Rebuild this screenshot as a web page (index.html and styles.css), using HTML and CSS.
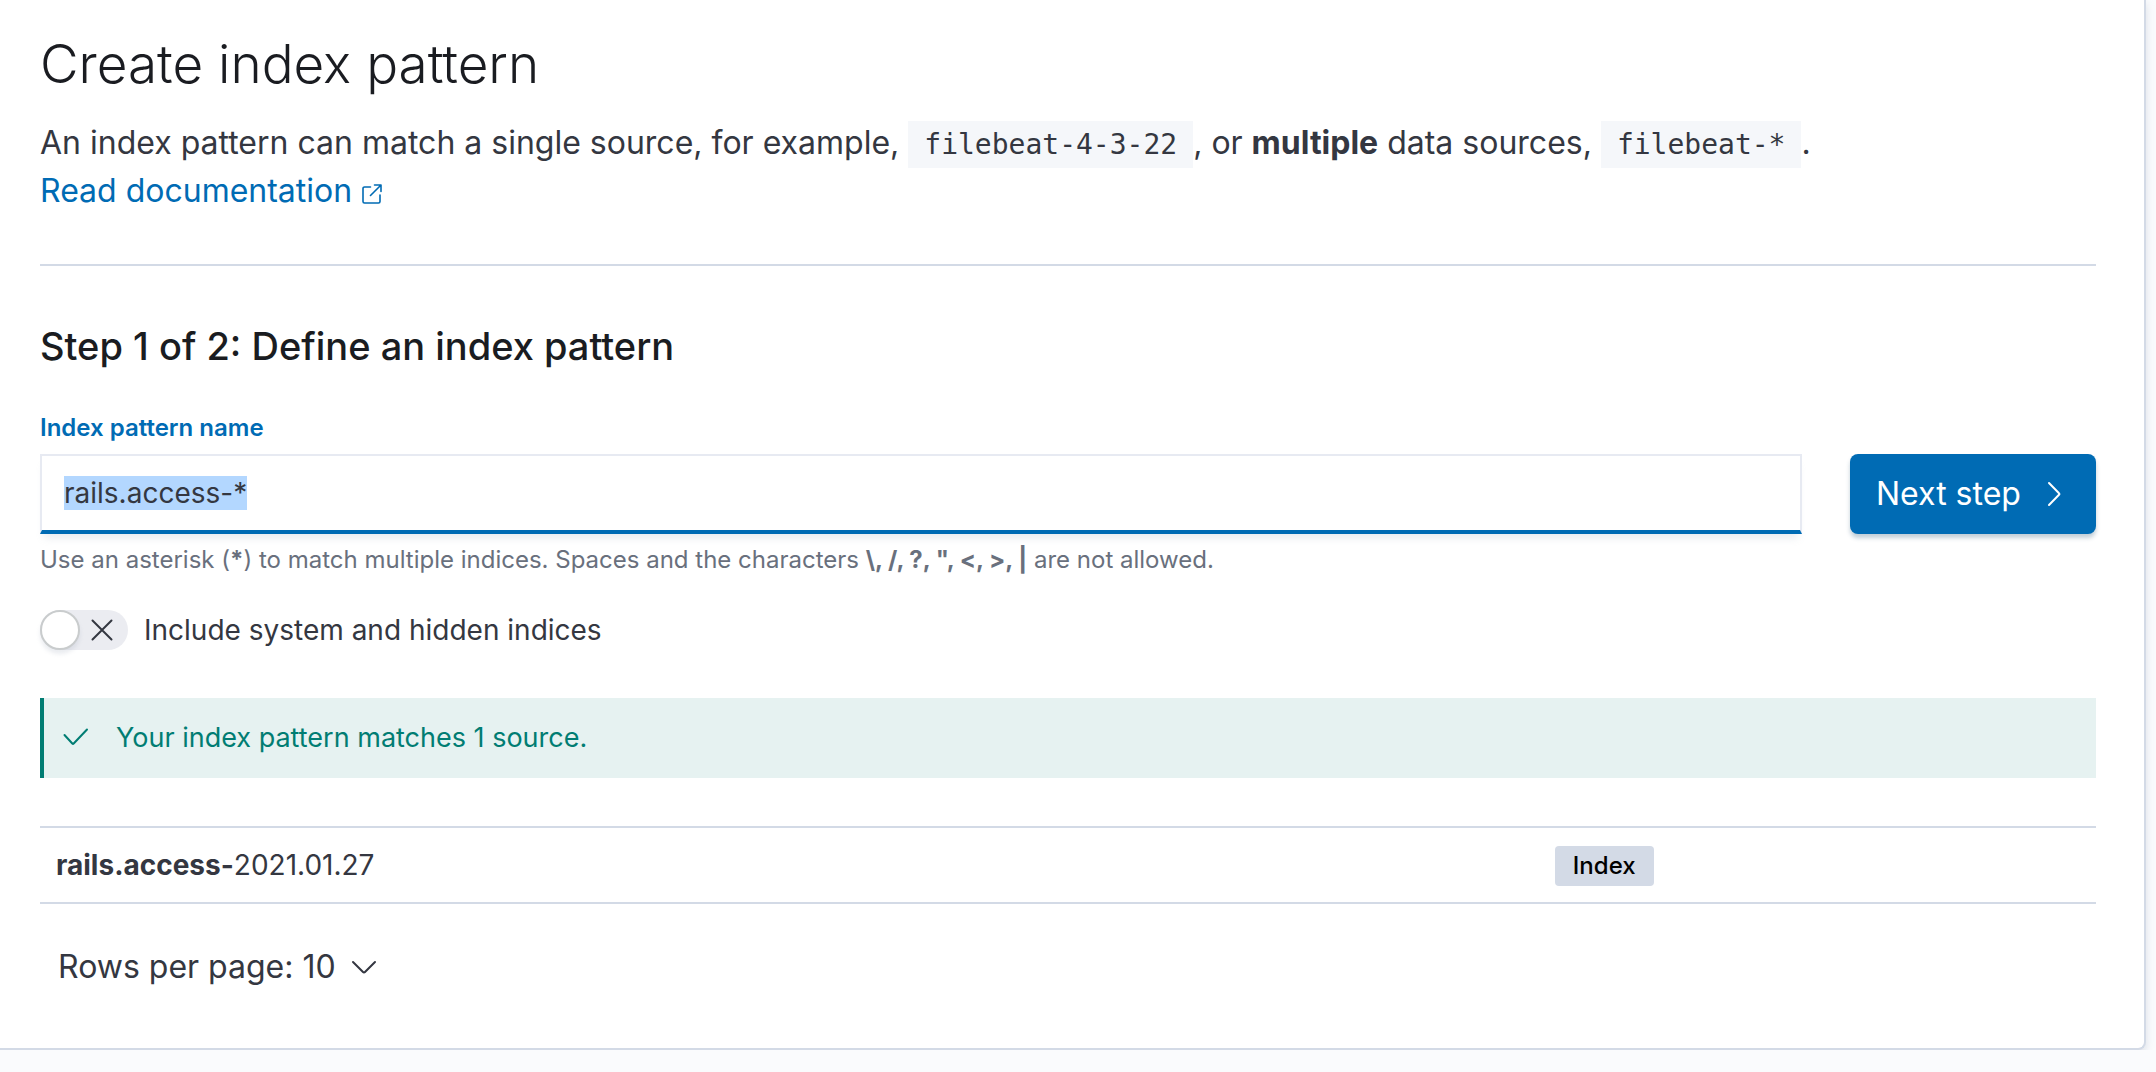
FILE: index.html
```html
<!DOCTYPE html>
<html lang="en">
<head>
    <meta charset="UTF-8">
    <meta name="viewport" content="width=device-width, initial-scale=1.0">
    <title>Create index pattern</title>
    <link rel="stylesheet" href="styles.css">
</head>
<body>
    <main class="panel">
        <header class="page-header">
            <h1>Create index pattern</h1>
            <p class="description">
                An index pattern can match a single source, for example, <code>filebeat-4-3-22</code>, or <strong>multiple</strong> data sources, <code>filebeat-*</code>.<br>
                <a href="#docs">Read documentation<svg class="external-icon" viewBox="0 0 20 20" aria-hidden="true"><path d="M8.500 3H2.500a1.500 1.500 0 0 0-1.500 1.500V17.500A1.500 1.500 0 0 0 2.500 19h14a1.500 1.500 0 0 0 1.500-1.500V11M12.500 1H19v6.500M19 1L8.500 11.500"/></svg></a>
            </p>
        </header>

        <hr>

        <h2>Step 1 of 2: Define an index pattern</h2>

        <form class="pattern-form">
            <div class="field">
                <label class="field-label" for="pattern-name">Index pattern name</label>
                <input type="text" id="pattern-name" class="field-text" value="rails.access-*" spellcheck="false" autocomplete="off" aria-describedby="pattern-help">
                <p class="help-text" id="pattern-help">Use an asterisk (<strong>*</strong>) to match multiple indices. Spaces and the characters <strong>\, /, ?, ", &lt;, &gt;, |</strong> are not allowed.</p>
            </div>
            <button type="submit" class="next-button">
                Next step
                <svg class="icon" viewBox="0 0 32 32" aria-hidden="true"><path d="M11 5l10 10.200a1 1 0 0 1 0 1.600L11 27"/></svg>
            </button>
        </form>

        <div class="switch">
            <span class="switch-body">
                <input type="checkbox" role="switch" id="include-hidden" class="switch-input">
                <svg class="switch-cross" viewBox="0 0 22 22" aria-hidden="true"><path d="M1.500 1.500l19 19M20.500 1.500l-19 19"/></svg>
            </span>
            <label for="include-hidden">Include system and hidden indices</label>
        </div>

        <div class="callout" role="status">
            <svg class="icon" viewBox="0 0 32 32" aria-hidden="true"><path d="M4.500 13l7.800 8.500a1 1 0 0 0 1.400 0L27 7.500"/></svg>
            <span>Your index pattern matches 1 source.</span>
        </div>

        <table class="matches">
            <tbody>
                <tr>
                    <td class="match-name"><strong>rails.access-</strong>2021.01.27</td>
                    <td><span class="badge">Index</span></td>
                </tr>
            </tbody>
        </table>

        <button type="button" class="rows-button">
            Rows per page: 10
            <svg class="icon" viewBox="0 0 32 32" aria-hidden="true"><path d="M5 11l10 10a1.400 1.400 0 0 0 2 0l10-10"/></svg>
        </button>
    </main>

    <script>
        const nameInput = document.getElementById('pattern-name');
        nameInput.focus();
        nameInput.select();
    </script>
</body>
</html>
```
FILE: styles.css
```css
*,
*::before {
    box-sizing: border-box;
}

body {
    margin: 0;
    background-color: #fafbfd;
    color: #343741;
    font-family: Inter, 'Liberation Sans', sans-serif;
    font-size: 28px;
    line-height: 40px;
}

.panel {
    margin-right: 10px;
    padding: 32px 48px 57px 40px;
    background-color: #fff;
    border-right: 2px solid #d3dae6;
    border-bottom: 2px solid #d3dae6;
    border-bottom-right-radius: 8px;
    box-shadow: 0 4px 8px rgba(152, 162, 179, 0.3);
}

h1, h2, p {
    margin: 0;
}

h1 {
    margin-bottom: 23px;
    color: #1a1c21;
    font-size: 53px;
    font-weight: 300;
    line-height: 64px;
}

.description {
    font-size: 32px;
    line-height: 48px;
}

strong {
    font-weight: 700;
}

a {
    color: #006bb4;
    text-decoration: none;
}

a:hover {
    text-decoration: underline;
}

code {
    padding: 7px 16px;
    background-color: #f5f7fa;
    font-family: 'DejaVu Sans Mono', monospace;
    font-size: 28px;
    line-height: 32px;
}

svg {
    fill: none;
    stroke: currentColor;
    stroke-width: 2;
    stroke-linecap: round;
    stroke-linejoin: round;
    flex-shrink: 0;
}

.external-icon {
    width: 20px;
    height: 20px;
    margin-left: 10px;
    vertical-align: -2px;
    stroke-width: 1.6;
}

.icon {
    width: 32px;
    height: 32px;
}

hr {
    margin: 49px 0 56px;
    border: 0;
    border-top: 2px solid #d3dae6;
}

h2 {
    margin-bottom: 40px;
    color: #1a1c21;
    font-size: 38px;
    font-weight: 500;
    line-height: 48px;
}

.pattern-form {
    display: flex;
    align-items: center;
    gap: 48px;
    margin-bottom: 32px;
}

.field {
    flex: 1;
}

.field-label {
    display: block;
    margin-bottom: 8px;
    color: #006bb4;
    font-size: 24px;
    font-weight: 600;
    line-height: 36px;
}

.field-text {
    display: block;
    width: 100%;
    height: 80px;
    padding: 0 22px;
    border: 2px solid #e7eaf2;
    border-bottom: 4px solid #006bb4;
    border-radius: 0;
    outline: none;
    background-color: #fff;
    box-shadow: 0 8px 8px -4px rgba(152, 162, 179, 0.2);
    color: #343741;
    font: inherit;
}

.field-text::selection {
    background-color: #b3d7ff;
    color: #343741;
}

.help-text {
    margin-top: 8px;
    color: #69707d;
    font-size: 24px;
    line-height: 36px;
}

.next-button {
    display: flex;
    align-items: center;
    justify-content: space-between;
    gap: 16px;
    width: 246px;
    height: 80px;
    padding: 0 26px;
    border: 0;
    border-radius: 8px;
    background-color: #006bb4;
    box-shadow: 0 4px 4px rgba(54, 97, 126, 0.3);
    color: #fff;
    font: inherit;
    font-size: 32px;
    cursor: pointer;
}

.switch {
    display: flex;
    align-items: center;
    gap: 16px;
    margin-bottom: 48px;
}

.switch-body {
    display: flex;
    align-items: center;
    position: relative;
    width: 88px;
    height: 40px;
}

.switch-input {
    appearance: none;
    width: 100%;
    height: 100%;
    margin: 0;
    border-radius: 20px;
    background-color: #ebecf1;
    cursor: pointer;
}

.switch-input::before {
    content: '';
    display: block;
    width: 40px;
    height: 40px;
    border: 2px solid #c9cccd;
    border-radius: 50%;
    background-color: #fff;
    box-shadow: 0 4px 4px rgba(152, 162, 179, 0.2);
}

.switch-input:checked {
    background-color: #006bb4;
}

.switch-input:checked::before {
    margin-left: auto;
}

.switch-cross {
    position: absolute;
    right: 15px;
    width: 22px;
    height: 22px;
    pointer-events: none;
}

.callout {
    display: flex;
    align-items: center;
    gap: 24px;
    height: 80px;
    margin-bottom: 48px;
    padding: 0 16px;
    border-left: 4px solid #017d73;
    background-color: #e6f2f1;
    color: #017d73;
    font-size: 27px;
}

.matches {
    width: 100%;
    margin-bottom: 39px;
    border-collapse: separate;
    border-spacing: 0;
    border-top: 2px solid #d3dae6;
    border-bottom: 2px solid #d3dae6;
}

.matches td {
    height: 74px;
    padding: 0 16px;
}

.match-name {
    width: 72.9%;
}

.badge {
    display: inline-block;
    padding: 0 18px;
    border-radius: 4px;
    background-color: #d3dae6;
    color: #000;
    font-size: 24px;
    font-weight: 500;
    vertical-align: middle;
}

.rows-button {
    display: flex;
    align-items: center;
    gap: 12px;
    padding: 0 18px;
    border: 0;
    background: none;
    color: inherit;
    font: inherit;
    font-size: 32px;
    line-height: 48px;
    cursor: pointer;
}
```
